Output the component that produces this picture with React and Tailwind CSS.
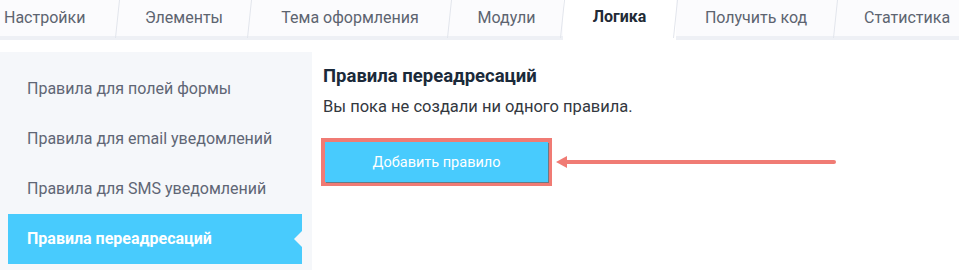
const tabs = [
  { label: 'Настройки', w: 'w-[118px]', pad: 'justify-start pl-1' },
  { label: 'Элементы', w: 'w-[132px]', pad: 'justify-center' },
  { label: 'Тема оформления', w: 'w-[200px]', pad: 'justify-center' },
  { label: 'Модули', w: 'w-[113px]', pad: 'justify-center' },
  { label: 'Логика', w: 'w-[113px]', pad: 'justify-center', active: true },
  { label: 'Получить код', w: 'w-[160px]', pad: 'justify-center' },
  { label: 'Статистика', w: 'w-[123px]', pad: 'justify-start pl-7' },
];

const rules = [
  'Правила для полей формы',
  'Правила для email уведомлений',
  'Правила для SMS уведомлений',
  'Правила переадресаций',
];

export default function App() {
  return (
    <div className="w-[959px] h-[270px] overflow-hidden bg-white font-['Roboto',sans-serif]">
      {/* tabs */}
      <div className="flex h-[40px] bg-[#eef0f5]">
        {tabs.map((t, i) => (
          <div
            key={t.label}
            className={`relative flex ${t.pad} ${t.w} ${t.active ? 'h-[40px] bg-white pt-[7px]' : 'h-[36px] bg-[#fbfbfd] pt-[8px]'}`}
          >
            <span className={`text-[16px] leading-[19px] ${t.active ? 'font-bold text-[#222b36]' : 'text-[#5d6470]'}`}>
              {t.label}
            </span>
            {i < tabs.length - 1 && (
              <span className="absolute right-0 top-0 h-[38px] w-[1px] bg-[#e2e5ec] -skew-x-6 z-10" />
            )}
          </div>
        ))}
      </div>

      <div className="flex mt-[12px]">
        {/* sidebar */}
        <div className="w-[312px] h-[218px] bg-[#f5f7fa] pt-[12px]">
          <ul>
            {rules.map((r, i) =>
              i === rules.length - 1 ? (
                <li key={r} className="relative ml-[8px] w-[294px] h-[50px] bg-[#48cbfd] flex items-center pl-[19px] text-[16px] font-bold text-white">
                  {r}
                  <span className="absolute right-0 top-[17px] w-0 h-0 border-y-[8px] border-y-transparent border-r-[8px] border-r-[#f5f7fa]" />
                </li>
              ) : (
                <li key={r} className="h-[50px] flex items-center pl-[27px] text-[16px] text-[#5f6675]">
                  {r}
                </li>
              )
            )}
          </ul>
        </div>

        {/* main */}
        <div className="pl-[11px] pt-[13px] flex-1">
          <h2 className="text-[18.5px] leading-[22px] font-bold text-[#1b2a3a]">Правила переадресаций</h2>
          <p className="mt-[10px] text-[16.5px] leading-[20px] text-[#333840]">Вы пока не создали ни одного правила.</p>
          <div className="mt-[21px] flex items-center">
            <div className="-ml-[2px] border-[4px] border-[#f07b74]">
              <button className="w-[223px] h-[40px] pt-[1px] bg-[#48cbfd] text-white text-[14.5px] shadow-[1px_1px_0_#6b7a85]">
                Добавить правило
              </button>
            </div>
            <svg width="284" height="16" viewBox="0 0 284 16" className="ml-[2px]">
              <line x1="10" y1="8" x2="280" y2="8" stroke="#f07b74" strokeWidth="4" strokeLinecap="round" />
              <path d="M2 8 L13 2 L13 14 Z" fill="#f07b74" />
            </svg>
          </div>
        </div>
      </div>
    </div>
  );
}
